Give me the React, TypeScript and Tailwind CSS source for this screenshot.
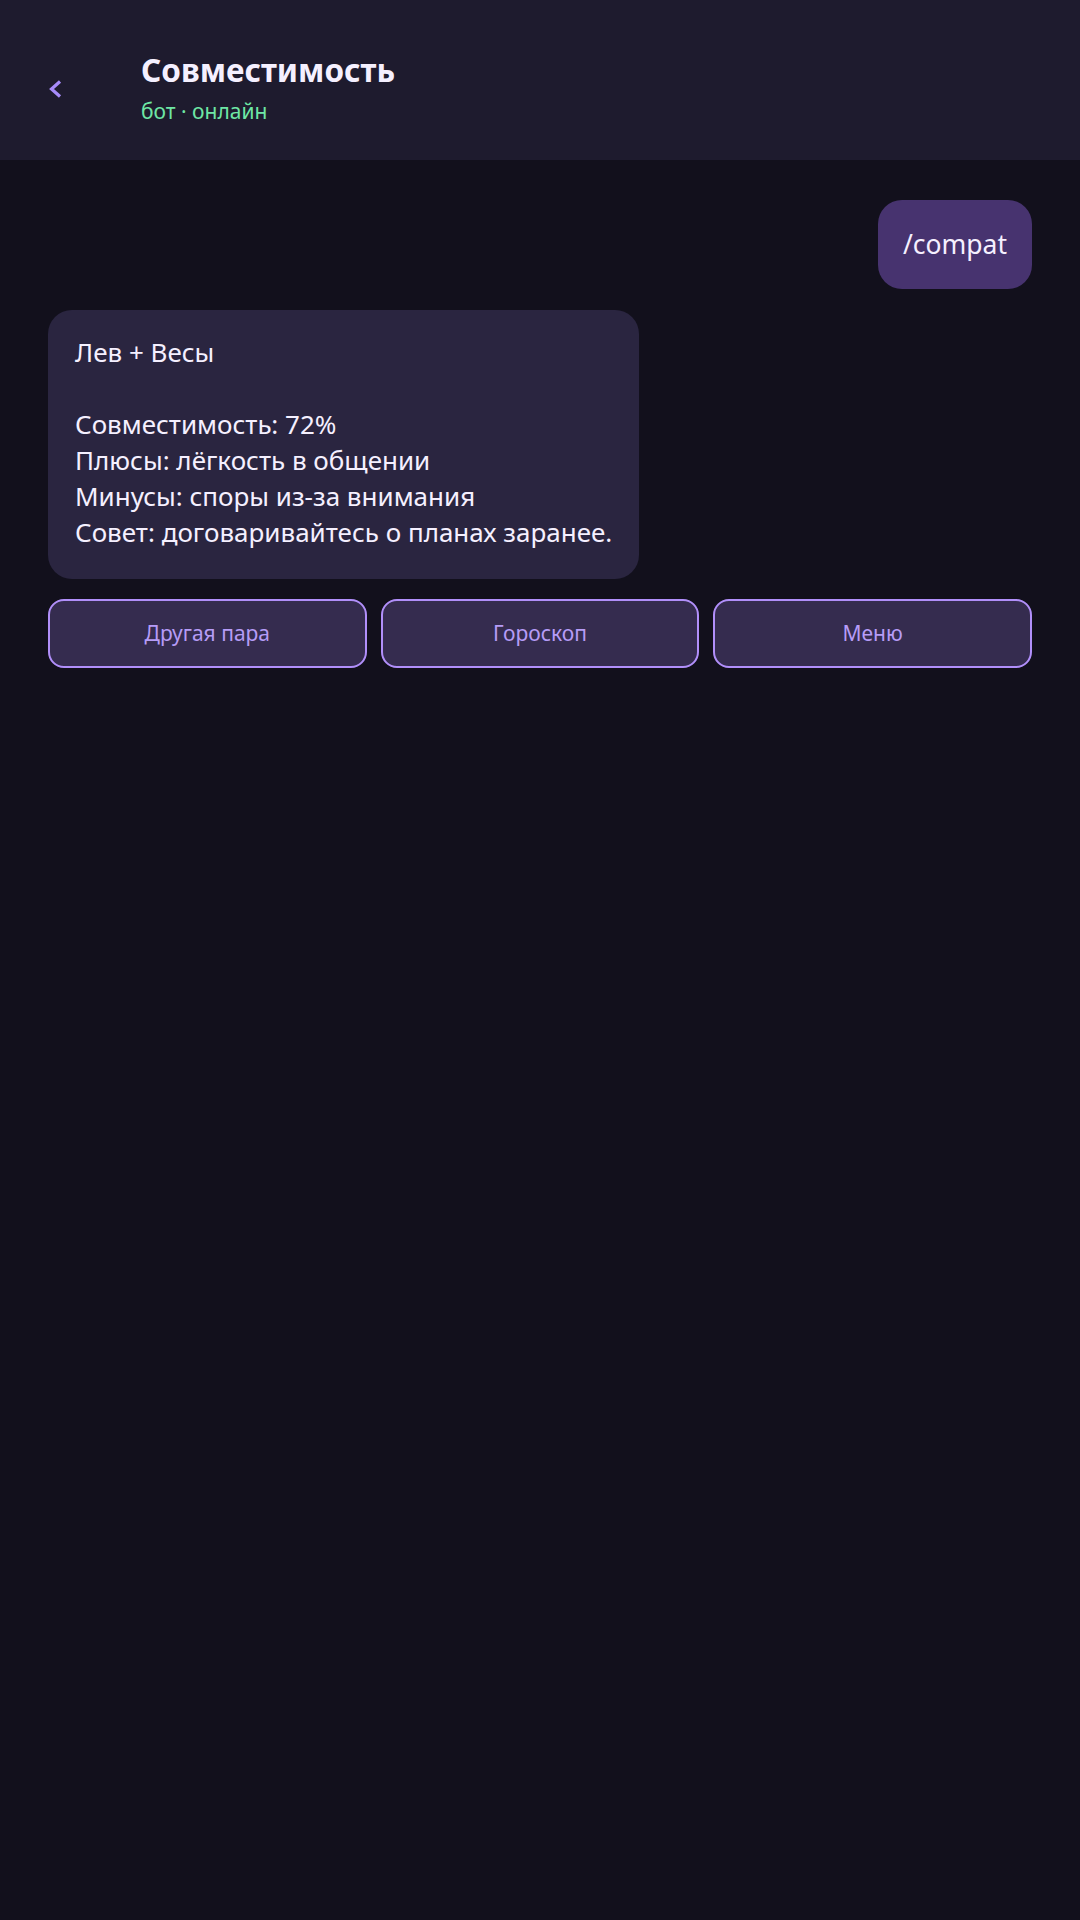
export default function App() {
  const buttons = ['Другая пара', 'Гороскоп', 'Меню'];

  return (
    <div className="min-h-[1920px] w-[1080px] bg-[#12101c] font-['Noto_Sans',sans-serif]">
      <header className="flex h-[160px] items-start bg-[#1e1b2e]">
        <button className="flex w-[141px] pl-[49px] pt-[80px] text-[#a78bfa]">
          <svg width="13" height="18" viewBox="0 0 13 18" fill="none">
            <path d="M11 1.5L2.5 9l8.5 7.5" stroke="currentColor" strokeWidth="3.2" strokeLinejoin="miter" />
          </svg>
        </button>
        <div className="flex flex-col pt-[50px]">
          <h1 className="text-[31.5px] font-bold leading-[40px] text-[#f5f0ff]">Совместимость</h1>
          <p className="mt-[7px] text-[21px] leading-[28px] text-[#6ee7a5]">бот · онлайн</p>
        </div>
      </header>

      <main className="flex flex-col px-[48px] pt-[40px]">
        <div className="self-end rounded-[24px] bg-[#47336f] px-[25px] py-[25px] text-[26.5px] leading-[39px] text-[#f5f0ff]">
          /compat
        </div>

        <div className="mt-[21px] self-start whitespace-pre-line rounded-[24px] bg-[#2a2540] px-[27px] pb-[29px] pt-[24px] text-[26px] leading-[36px] text-[#f5f0ff]">
          {'Лев + Весы\n\nСовместимость: 72%\nПлюсы: лёгкость в общении\nМинусы: споры из-за внимания\nСовет: договаривайтесь о планах заранее.'}
        </div>

        <div className="mt-[20px] grid grid-cols-3 gap-[14px]">
          {buttons.map((label) => (
            <button
              key={label}
              className="h-[69px] rounded-[16px] border-2 border-[#b18ffa] bg-[#352c4f] text-[21px] text-[#b69cf7]"
            >
              {label}
            </button>
          ))}
        </div>
      </main>
    </div>
  );
}
